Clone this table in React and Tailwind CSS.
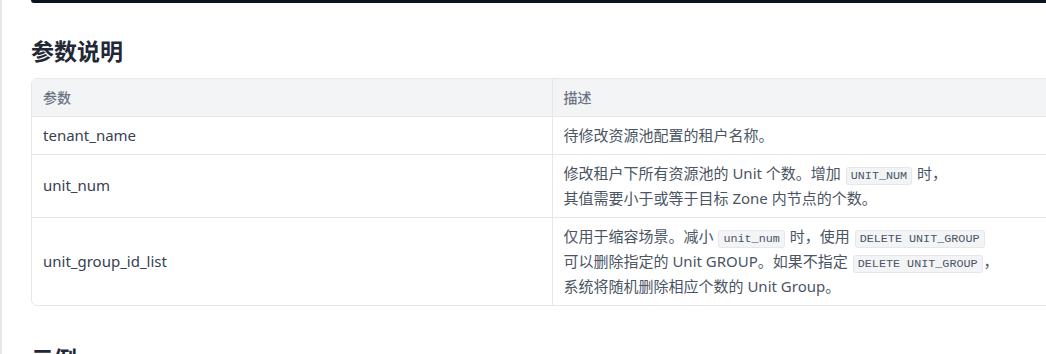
const params = [
  {
    name: 'tenant_name',
    desc: [['待修改资源池配置的租户名称。']],
  },
  {
    name: 'unit_num',
    desc: [
      ['修改租户下所有资源池的 Unit 个数。增加 ', { code: 'UNIT_NUM' }, ' 时，'],
      ['其值需要小于或等于目标 Zone 内节点的个数。'],
    ],
  },
  {
    name: 'unit_group_id_list',
    desc: [
      ['仅用于缩容场景。减小 ', { code: 'unit_num' }, ' 时，使用 ', { code: 'DELETE UNIT_GROUP' }],
      ['可以删除指定的 Unit GROUP。如果不指定 ', { code: 'DELETE UNIT_GROUP' }, '，'],
      ['系统将随机删除相应个数的 Unit Group。'],
    ],
  },
]

function Code({ children }) {
  return (
    <code className="mx-[1px] rounded-[3px] border border-[#e5e7eb] bg-[#f3f4f6] px-[4px] py-[1px] align-baseline font-['Liberation_Mono',monospace] text-[11.75px] leading-none text-[#4b5563]">
      {children}
    </code>
  )
}

export default function App() {
  return (
    <div className="h-[354px] w-[1046px] overflow-hidden bg-white font-['Noto_Sans','Noto_Sans_CJK_SC',sans-serif]">
      <div className="flex h-full border-l-2 border-[#e5e7eb]">
        <div className="ml-[29px] w-[1060px] shrink-0">
          <div className="h-[3px] rounded-bl-md bg-[#0b1120]" />

          <h2 className="mt-[33px] text-[23px] font-bold leading-[30px] text-[#1f2937]">参数说明</h2>

          <div className="mt-[12px] overflow-hidden rounded-md border border-[#e5e7eb]">
            <table className="w-full border-collapse text-[14px] leading-[25px] text-[#374151]">
              <thead>
                <tr className="border-b border-[#e5e7eb] bg-[#f3f4f6]">
                  {['参数', '描述'].map((h, i) => (
                    <th
                      key={h}
                      className={`h-[37px] px-[11px] py-0 text-left text-[14px] font-medium text-[#6b7280] ${i === 0 ? 'w-[520px] border-r border-[#e5e7eb]' : ''}`}
                    >
                      {h}
                    </th>
                  ))}
                </tr>
              </thead>
              <tbody>
                {params.map((p, idx) => (
                  <tr key={p.name} className={idx < params.length - 1 ? 'border-b border-[#e5e7eb]' : ''}>
                    <td className="border-r border-[#e5e7eb] px-[11px] py-[6px] align-middle text-[15px]">{p.name}</td>
                    <td className="px-[11px] py-[6px] text-[15px] text-[#4b5563]">
                      {p.desc.map((line, li) => (
                        <div key={li} className="h-[25px] whitespace-nowrap">
                          {line.map((part, pi) =>
                            typeof part === 'string' ? <span key={pi}>{part}</span> : <Code key={pi}>{part.code}</Code>
                          )}
                        </div>
                      ))}
                    </td>
                  </tr>
                ))}
              </tbody>
            </table>
          </div>

          <h2 className="mt-[38px] text-[23px] font-bold leading-[30px] text-[#1f2937]">示例</h2>
        </div>
      </div>
    </div>
  )
}
